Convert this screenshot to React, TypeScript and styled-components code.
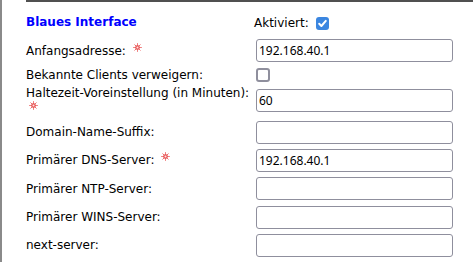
import React from "react";
import styled, { createGlobalStyle } from "styled-components";

const Global = createGlobalStyle`
  html, body { margin: 0; padding: 0; background: #fff; }
  body { font-family: "DejaVu Sans", Verdana, sans-serif; font-size: 12px; color: #000; }
`;

const Frame = styled.div`
  width: 473px;
  height: 262px;
  box-sizing: border-box;
  border-left: 2px solid #8a8a8a;
  overflow: hidden;
`;

const Panel = styled.div`
  margin-left: 24px;
  border-top: 2px solid #505050;
  padding-top: 10px;
  display: flex;
  flex-direction: column;
`;

const Row = styled.div<{ $h: number }>`
  display: flex;
  align-items: center;
  height: ${(p) => p.$h}px;
`;

const LabelCell = styled.div`
  flex: 0 0 228px;
  line-height: 16px;
  font-size: 12px;
`;

const Title = styled.div`
  flex: 0 0 228px;
  font-weight: bold;
  color: #0000ff;
  font-size: 12px;
  line-height: 16px;
  margin-bottom: 3px;
`;

const FieldCell = styled.div`
  flex: 1;
  display: flex;
  align-items: center;
`;

const Inline = styled.span`
  line-height: 16px;
`;

const TextInput = styled.input`
  box-sizing: border-box;
  width: 197px;
  height: 23px;
  margin: 0 0 0 2px;
  padding: 0 2px;
  border: 1px solid #8f8f9d;
  border-radius: 3px;
  font-family: "Noto Sans", "Open Sans", sans-serif;
  font-size: 12px;
  color: #000;
  background: #fff;
  outline: none;
`;

const Box = styled.span<{ $checked?: boolean; $ml: number }>`
  box-sizing: border-box;
  display: inline-flex;
  align-items: center;
  justify-content: center;
  width: ${(p) => (p.$checked ? 13 : 14)}px;
  height: ${(p) => (p.$checked ? 13 : 14)}px;
  margin-left: ${(p) => p.$ml}px;
  border-radius: 3px;
  background: ${(p) => (p.$checked ? "#3b86e0" : "#fff")};
  border: ${(p) => (p.$checked ? "none" : "2px solid #8f8f9d")};
`;

const Star = styled.svg`
  display: inline-block;
  width: 9px;
  height: 9px;
  margin-left: 3px;
  margin-right: 2px;
  vertical-align: 3px;
`;

const Required = () => (
  <Star viewBox="0 0 9 9">
    <g stroke="#f08080" strokeWidth="1" strokeLinecap="round">
      <line x1="4.5" y1="0.5" x2="4.5" y2="8.5" />
      <line x1="0.5" y1="4.5" x2="8.5" y2="4.5" />
      <line x1="1.7" y1="1.7" x2="7.3" y2="7.3" />
      <line x1="7.3" y1="1.7" x2="1.7" y2="7.3" />
    </g>
    <rect x="3" y="3" width="3" height="3" fill="#ffe6e6" stroke="#e03030" strokeWidth="0.9" />
  </Star>
);

const Checkbox = ({ checked, ml }: { checked?: boolean; ml: number }) => (
  <Box $checked={checked} $ml={ml}>
    {checked && (
      <svg width="13" height="13" viewBox="0 0 13 13">
        <path d="M3.2 6.8 L5.4 9 L9.8 3.9" fill="none" stroke="#fff" strokeWidth="2" strokeLinecap="round" strokeLinejoin="round" />
      </svg>
    )}
  </Box>
);

type Field = { label: string; value?: string; req?: boolean; h: number; check?: boolean };

const fields: Field[] = [
  { label: "Anfangsadresse:", value: "192.168.40.1", req: true, h: 33 },
  { label: "Bekannte Clients verweigern:", check: true, h: 16 },
  { label: "Haltezeit-Voreinstellung (in Minuten):", value: "60", req: true, h: 35 },
  { label: "Domain-Name-Suffix:", value: "", h: 28 },
  { label: "Primärer DNS-Server:", value: "192.168.40.1", req: true, h: 28 },
  { label: "Primärer NTP-Server:", value: "", h: 29 },
  { label: "Primärer WINS-Server:", value: "", h: 28 },
  { label: "next-server:", value: "", h: 28 },
];

export default function App() {
  return (
    <>
      <Global />
      <Frame>
        <Panel>
          <Row $h={22}>
            <Title>Blaues Interface</Title>
            <FieldCell>
              <Inline>Aktiviert:</Inline>
              <Checkbox checked ml={7} />
            </FieldCell>
          </Row>
          {fields.map((f) => (
            <Row key={f.label} $h={f.h}>
              <LabelCell>
                {f.label}
                {f.req && (
                  <>
                    {" "}
                    <Required />
                  </>
                )}
              </LabelCell>
              <FieldCell>
                {f.check ? (
                  <Checkbox ml={2} />
                ) : (
                  <TextInput type="text" defaultValue={f.value} />
                )}
              </FieldCell>
            </Row>
          ))}
        </Panel>
      </Frame>
    </>
  );
}
